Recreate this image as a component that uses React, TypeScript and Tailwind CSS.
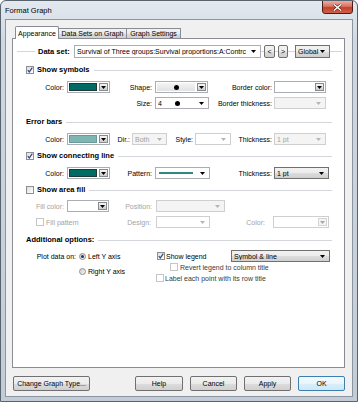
import React from 'react';

const font = "font-['Liberation_Sans',Arial,sans-serif]";
const btnBg = 'bg-[linear-gradient(#f2f2f2,#ebebeb_50%,#dddddd_50%,#cfcfcf)]';

function Tri({ color = '#000' }: { color?: string }) {
  return (
    <svg width="5" height="3" viewBox="0 0 5 3" className="shrink-0">
      <path d="M0 0h5L2.5 3z" fill={color} />
    </svg>
  );
}

function Check({ checked, disabled }: { checked?: boolean; disabled?: boolean }) {
  return (
    <div
      className={`w-[8px] h-[8px] shrink-0 border flex items-center justify-center ${
        disabled ? 'border-[#c6c6c6] bg-white' : 'border-[#8e8f8f] bg-gradient-to-br from-[#dedede] to-white'
      }`}
    >
      {checked && (
        <svg width="6" height="6" viewBox="0 0 6 6">
          <path d="M0.8 3.1 L2.3 4.9 L5.3 0.7" fill="none" stroke="#33488c" strokeWidth="1.2" />
        </svg>
      )}
    </div>
  );
}

function Radio({ on }: { on?: boolean }) {
  return (
    <div className="w-[7px] h-[7px] shrink-0 rounded-full border border-[#8e8f8f] bg-gradient-to-br from-[#cfcfcf] to-[#f4f4f4] flex items-center justify-center">
      {on && <div className="w-[3px] h-[3px] rounded-full bg-[#1d3a6c]" />}
    </div>
  );
}

function Header({ label, check, className = '' }: { label: string; check?: boolean; className?: string }) {
  return (
    <div className={`flex items-center h-[10px] ${className}`}>
      {check !== undefined && (
        <>
          <Check checked={check} />
          <div className="w-[3px] shrink-0" />
        </>
      )}
      <span className="text-[7.5px] font-bold whitespace-nowrap">{label}</span>
      <div className="flex-1 h-px bg-[#d3d7dc] ml-[4px]" />
    </div>
  );
}

// right aligned label cell
function Lbl({ className, children, dim }: { className: string; children: React.ReactNode; dim?: boolean }) {
  return (
    <div className={`shrink-0 text-right whitespace-nowrap ${dim ? 'text-[#a3a3a3]' : ''} ${className}`}>{children}</div>
  );
}

// combo with plain arrow
function Combo({
  className,
  children,
  kind = 'white',
}: {
  className: string;
  children?: React.ReactNode;
  kind?: 'white' | 'off' | 'grad';
}) {
  const look =
    kind === 'white'
      ? 'bg-white border-[#abadb3]'
      : kind === 'off'
      ? 'bg-[#f4f4f4] border-[#cfcfcf] text-[#a3a3a3]'
      : `${btnBg} border-[#707070]`;
  return (
    <div className={`shrink-0 h-full border flex items-center pl-[2px] pr-[4px] overflow-hidden whitespace-nowrap ${look} ${className}`}>
      <div className="flex-1 flex items-center overflow-hidden">{children}</div>
      <Tri color={kind === 'off' ? '#b5b5b5' : '#000'} />
    </div>
  );
}

// combo with separate arrow button (colour pickers, shape)
function Split({
  className,
  children,
  off,
  inner = 'bg-white',
}: {
  className: string;
  children?: React.ReactNode;
  off?: boolean;
  inner?: string;
}) {
  return (
    <div className={`shrink-0 h-full flex border ${off ? 'border-[#cfcfcf]' : 'border-[#a9aeb5]'} bg-white p-px gap-[2px] ${className}`}>
      <div className={`flex-1 flex items-center justify-center ${inner}`}>{children}</div>
      <div
        className={`w-[9px] shrink-0 border flex items-center justify-center ${
          off ? 'border-[#d5d5d5] bg-[#f4f4f4]' : `border-[#8a8a8a] ${btnBg}`
        }`}
      >
        <Tri color={off ? '#a8a8a8' : '#000'} />
      </div>
    </div>
  );
}

function Btn({ className, children, def }: { className: string; children: React.ReactNode; def?: boolean }) {
  return (
    <div
      className={`h-[15px] shrink-0 flex items-center justify-center rounded-[2px] border text-[7px] ${
        def
          ? 'border-[#3c7fb1] bg-[linear-gradient(#f4fafe,#e9f5fc_50%,#d9eefa_50%,#cde8f7)]'
          : `border-[#707070] ${btnBg}`
      } ${className}`}
    >
      {children}
    </div>
  );
}

function Dot() {
  return <div className="w-[5px] h-[5px] rounded-full bg-black shrink-0" />;
}

export default function App() {
  return (
    <div
      className={`${font} w-[358px] h-[402px] flex flex-col border border-[#59636e] rounded-t-[6px] bg-[linear-gradient(#e3e9ef,#cfd8e1_40px,#c2ccd7)] text-black text-[7px] leading-none overflow-hidden`}
    >
      {/* title bar */}
      <div className="h-[18px] shrink-0 flex items-start justify-between">
        <span className="text-[7.5px] mt-[6px] ml-[4px]">Format Graph</span>
        <div className="w-[31px] h-[14px] mr-[4px] -mt-px rounded-b-[3px] border border-[#4c1c17] bg-[linear-gradient(#eab0a6,#d8705f_45%,#c4402c_55%,#d0604a)] flex items-center justify-center">
          <svg width="9" height="7" viewBox="0 0 9 7">
            <path d="M1 0.5 L8 6.5 M8 0.5 L1 6.5" stroke="#5a1a12" strokeWidth="2.6" />
            <path d="M1 0.5 L8 6.5 M8 0.5 L1 6.5" stroke="#fff" strokeWidth="1.5" />
          </svg>
        </div>
      </div>

      {/* client area */}
      <div className="flex-1 mx-[4px] mb-[4px] border border-[#8b96a2] bg-[#f0f0f0] flex flex-col">
        {/* tabs */}
        <div className="h-[12px] mt-[6px] pl-[9px] flex items-end shrink-0">
          <div className="relative z-10 w-[44px] h-[13px] -mb-px bg-white border border-b-0 border-[#898c95] rounded-t-[2px] flex items-center justify-center">
            Appearance
          </div>
          <div className={`w-[68px] h-[10px] border border-b-0 border-l-0 border-[#898c95] ${btnBg} flex items-center justify-center`}>
            Data Sets on Graph
          </div>
          <div className={`w-[54px] h-[10px] border border-b-0 border-l-0 border-[#898c95] ${btnBg} flex items-center justify-center`}>
            Graph Settings
          </div>
        </div>

        {/* panel */}
        <div className="ml-[6px] mr-[7px] h-[330px] shrink-0 border border-[#898c95] bg-white pl-[13px] pr-[12px] pt-[6px] flex flex-col">
          {/* data set */}
          <div className="h-[13px] -ml-[9px] -mr-[10px] flex items-center">
            <div className="w-[18px] h-px bg-[#d3d7dc]" />
            <span className="ml-[3px] text-[7.5px] font-bold w-[34px] whitespace-nowrap">Data set:</span>
            <Combo className="w-[187px] ml-[2px]">Survival of Three groups:Survival proportions:A:Contrc</Combo>
            <div className="w-[3px] h-px bg-[#d3d7dc]" />
            <Btn className="w-[11px] !h-full">&lt;</Btn>
            <div className="w-[3px] h-px bg-[#d3d7dc]" />
            <Btn className="w-[10px] !h-full">&gt;</Btn>
            <div className="w-[7px] h-px bg-[#d3d7dc]" />
            <Combo kind="grad" className="w-[35px]">Global</Combo>
            <div className="flex-1 h-px bg-[#d3d7dc]" />
          </div>

          <Header label="Show symbols" check className="mt-[7px]" />

          {/* colour / shape / border colour */}
          <div className="h-[12px] mt-[6px] flex items-center">
            <Lbl className="w-[38px]">Color:</Lbl>
            <Split className="w-[43px] ml-[3px]" inner="bg-[#006b65] border border-[#1d3a38]" />
            <Lbl className="w-[42px]">Shape:</Lbl>
            <Split className="w-[53px] ml-[3px]" inner="bg-[linear-gradient(#f4f4f4,#e2e2e2)]">
              <Dot />
            </Split>
            <Lbl className="w-[64px]">Border color:</Lbl>
            <Split className="w-[52px] ml-[2px]" />
          </div>

          {/* size / border thickness */}
          <div className="h-[12px] mt-[4px] flex items-center">
            <div className="w-[84px] shrink-0" />
            <Lbl className="w-[42px]">Size:</Lbl>
            <Combo className="w-[54px] ml-[3px]">
              <span className="w-[17px] shrink-0">4</span>
              <Dot />
            </Combo>
            <Lbl className="w-[63px]">Border thickness:</Lbl>
            <Combo kind="off" className="w-[52px] ml-[2px]" />
          </div>

          <Header label="Error bars" className="mt-[8px]" />

          <div className="h-[12px] mt-[6px] flex items-center">
            <Lbl className="w-[38px]">Color:</Lbl>
            <Split className="w-[43px] ml-[3px]" inner="bg-[#7fb6b2] border border-[#6a9a97]" />
            <Lbl className="w-[20px]">Dir.:</Lbl>
            <Combo kind="off" className="w-[35px] ml-[2px]">Both</Combo>
            <Lbl className="w-[26px]">Style:</Lbl>
            <Combo kind="off" className="w-[36px] ml-[2px] !bg-white" />
            <Lbl className="w-[41px]">Thickness:</Lbl>
            <Combo kind="off" className="w-[52px] ml-[2px]">1 pt</Combo>
          </div>

          <Header label="Show connecting line" check className="mt-[6px]" />

          <div className="h-[12px] mt-[6px] flex items-center">
            <Lbl className="w-[38px]">Color:</Lbl>
            <Split className="w-[43px] ml-[3px]" inner="bg-[#006b65] border border-[#1d3a38]" />
            <Lbl className="w-[42px]">Pattern:</Lbl>
            <Combo className="w-[55px] ml-[3px]">
              <div className="w-[34px] h-[1.5px] bg-[#2f8a84] ml-[1px]" />
            </Combo>
            <Lbl className="w-[62px]">Thickness:</Lbl>
            <Combo kind="grad" className="w-[55px] ml-[2px]">1 pt</Combo>
          </div>

          <Header label="Show area fill" check={false} className="mt-[6px]" />

          <div className="h-[12px] mt-[5px] flex items-center">
            <Lbl className="w-[38px]" dim>Fill color:</Lbl>
            <Split className="w-[42px] ml-[3px]" />
            <Lbl className="w-[43px]" dim>Position:</Lbl>
            <Combo kind="off" className="w-[69px] ml-[4px]" />
          </div>

          <div className="h-[12px] mt-[4px] flex items-center">
            <div className="w-[100px] shrink-0 flex items-center pl-[10px]">
              <Check disabled />
              <span className="ml-[2px] text-[#a3a3a3]">Fill pattern</span>
            </div>
            <Lbl className="w-[25px]" dim>Design:</Lbl>
            <Combo kind="off" className="w-[54px] ml-[5px] !bg-white" />
            <Lbl className="w-[55px]" dim>Color:</Lbl>
            <Split className="w-[56px] ml-[8px]" off />
          </div>

          <Header label="Additional options:" className="mt-[7px]" />

          {/* plot data on / legend */}
          <div className="mt-[5px] flex">
            <div className="w-[131px] shrink-0 flex">
              <div className="w-[50px] h-[12px] flex items-center justify-end">Plot data on:</div>
              <div className="ml-[3px] flex flex-col">
                <div className="h-[12px] flex items-center">
                  <Radio on />
                  <span className="ml-[2px]">Left Y axis</span>
                </div>
                <div className="h-[12px] mt-[3px] flex items-center">
                  <Radio />
                  <span className="ml-[2px]">Right Y axis</span>
                </div>
              </div>
            </div>
            <div className="flex-1 flex flex-col">
              <div className="h-[12px] flex items-center">
                <Check checked />
                <span className="ml-[1px]">Show legend</span>
                <div className="flex-1" />
                <Combo kind="grad" className="w-[99px] mr-[2px]">Symbol &amp; line</Combo>
              </div>
              <div className="h-[10px] flex items-center pl-[13px]">
                <Check disabled />
                <span className="ml-[2px] text-[#3a3a3a]">Revert legend to column title</span>
              </div>
              <div className="h-[10px] mt-px flex items-center -ml-px">
                <Check disabled />
                <span className="ml-[1px] text-[#3a3a3a]">Label each point with its row title</span>
              </div>
            </div>
          </div>
        </div>

        {/* buttons */}
        <div className="h-[15px] mt-[8px] px-[7px] flex items-center gap-[7px] shrink-0">
          <Btn className="w-[77px]">Change Graph Type...</Btn>
          <div className="flex-1" />
          <Btn className="w-[48px]">Help</Btn>
          <Btn className="w-[47px]">Cancel</Btn>
          <Btn className="w-[47px]">Apply</Btn>
          <Btn className="w-[47px]" def>
            OK
          </Btn>
        </div>
      </div>
    </div>
  );
}
